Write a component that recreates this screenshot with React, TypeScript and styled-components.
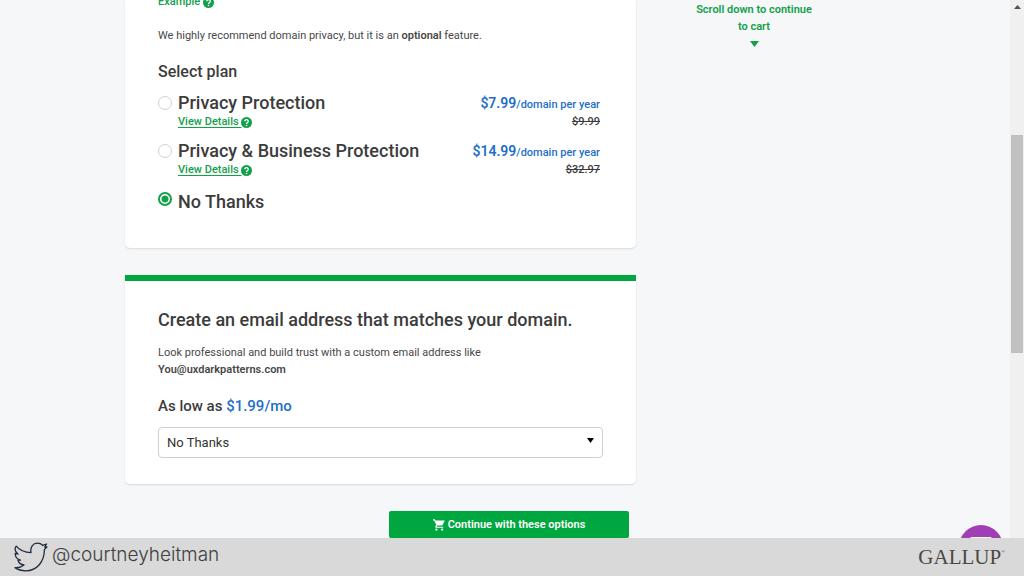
import React, { useState } from "react";
import styled, { createGlobalStyle } from "styled-components";

const GlobalStyle = createGlobalStyle`
  *, *::before, *::after { box-sizing: border-box; }
  body {
    margin: 0;
    background: #f5f7f9;
    color: #3c3c3c;
    font-family: Roboto, "Liberation Sans", sans-serif;
    font-size: 11px;
    line-height: 17px;
  }
  h2, h3, p { margin: 0; }
`;

const Frame = styled.div`
  display: grid;
  grid-template-rows: minmax(0, 1fr) auto;
  height: 100vh;
  overflow: hidden;
`;

const Viewport = styled.div`
  position: relative;
  display: flex;
  min-height: 0;
  overflow: hidden;
`;

const Page = styled.div`
  flex: 1;
  min-width: 0;
`;

const Columns = styled.div`
  display: grid;
  grid-template-columns: minmax(0, 1fr) 236px;
  max-width: 760px;
  margin: 0 auto;
  padding-right: 13px;
`;

const Main = styled.main`
  display: flex;
  flex-direction: column;
`;

const Card = styled.section<{ $accent?: boolean }>`
  padding: ${(p) => (p.$accent ? "27px 33px 26px" : "0 36px 36px 33px")};
  margin-bottom: 27px;
  background: #fff;
  border-top: ${(p) => (p.$accent ? "6px solid #00a63f" : "0")};
  border-radius: 0 0 5px 5px;
  box-shadow: 0 1px 2px rgba(0, 0, 0, 0.12);
`;

const GreenLink = styled.a<{ $plain?: boolean }>`
  color: #12a04a;
  font-weight: 500;
  text-decoration: ${(p) => (p.$plain ? "none" : "underline")};
  text-underline-offset: 2px;
  svg { vertical-align: -3px; }
`;

const Example = styled.div`
  margin-top: -7px;
`;

const Paragraph = styled.p`
  color: #484848;
  strong { font-weight: 600; }
`;

const Intro = styled(Paragraph)`
  margin-top: 17px;
`;

const Subheading = styled.h3`
  font-size: 15px;
  line-height: 22px;
  font-weight: 500;
`;

const PlanTitle = styled(Subheading)`
  margin-top: 17px;
  font-size: 16px;
`;

const Heading = styled.h2`
  font-size: 18px;
  line-height: 24px;
  font-weight: 500;
  margin-bottom: 12px;
`;

const Plans = styled.div`
  display: flex;
  flex-direction: column;
  gap: 11px;
  margin-top: 10px;
`;

const Plan = styled.div`
  display: grid;
  grid-template-columns: 14px minmax(0, 1fr) auto;
  column-gap: 6px;
`;

const Radio = styled.input`
  appearance: none;
  width: 14px;
  height: 14px;
  margin: 3px 0 0;
  border: 1px solid #cfd2d6;
  border-radius: 50%;
  background: #fff;
  &:checked {
    border: 2px solid #12a04a;
    background: radial-gradient(circle, #12a04a 3px, #fff 4px);
  }
`;

const PlanInfo = styled.div`
  display: flex;
  flex-direction: column;
  align-items: flex-start;
`;

const PlanName = styled.label<{ $low?: boolean }>`
  padding-top: ${(p) => (p.$low ? "3px" : "0")};
  font-size: 18px;
  line-height: 20px;
  font-weight: 500;
`;

const Pricing = styled.div`
  text-align: right;
  font-weight: 500;
`;

const Price = styled.div`
  height: 20px;
  color: #1f6fc9;
  line-height: 20px;
  b { font-size: 14px; font-weight: 600; }
`;

const OldPrice = styled.s`
  display: block;
`;

const EmailPrice = styled(Subheading)`
  margin: 17px 0 10px;
  span { color: #1f6fc9; }
`;

const SelectBox = styled.div`
  position: relative;
  svg {
    position: absolute;
    right: 9px;
    top: 11px;
    pointer-events: none;
  }
`;

const Select = styled.select`
  appearance: none;
  display: block;
  width: 100%;
  height: 31px;
  padding: 0 8px;
  border: 1px solid #cfcfcf;
  border-radius: 4px;
  background: #fff;
  color: #333;
  font: 400 13px Roboto, "Liberation Sans", sans-serif;
`;

const ContinueButton = styled.button`
  display: flex;
  align-items: center;
  justify-content: center;
  gap: 3px;
  align-self: flex-end;
  width: 240px;
  height: 27px;
  margin-right: 7px;
  padding: 0;
  border: 0;
  border-radius: 2px;
  background: #00a63f;
  color: #fff;
  font: 600 11px Roboto, "Liberation Sans", sans-serif;
`;

const Aside = styled.aside`
  display: flex;
  flex-direction: column;
  align-items: center;
  gap: 6px;
  padding-top: 1px;
  color: #12a04a;
  font-weight: 600;
  text-align: center;
  p { max-width: 124px; }
`;

const ChatBubble = styled.button`
  position: absolute;
  right: 21px;
  bottom: -31px;
  display: flex;
  justify-content: center;
  align-items: flex-start;
  width: 44px;
  height: 44px;
  padding: 12px 0 0;
  border: 0;
  border-radius: 50%;
  background: #a13db5;
`;

const ScrollTrack = styled.div`
  display: flex;
  flex-direction: column;
  align-items: center;
  width: 14px;
  padding-top: 5px;
  background: #f0f0f0;
`;

const ScrollThumb = styled.div`
  width: 12px;
  height: 218px;
  margin-top: 126px;
  background: #c1c1c1;
`;

const Footer = styled.footer`
  display: flex;
  align-items: center;
  justify-content: space-between;
  height: 38px;
  padding: 0 19px 0 14px;
  background: #d9d9d9;
`;

const Handle = styled.div`
  display: flex;
  align-items: flex-start;
  gap: 4px;
  color: #404040;
  font-family: Inter, "Liberation Sans", sans-serif;
  font-size: 19px;
  font-weight: 300;
  line-height: 26px;
`;

const Brand = styled.div`
  display: flex;
  color: #4a4844;
  font-family: "Liberation Serif", serif;
  font-size: 21px;
  line-height: 36px;
  sup { font-size: 5px; line-height: 26px; }
`;

const HelpIcon = () => (
  <svg width="11" height="11" viewBox="0 0 22 22" aria-hidden="true">
    <circle cx="11" cy="11" r="11" fill="#12a04a" />
    <path d="M7.500 8.600a3.500 3.300 0 1 1 5.400 2.600c-1.200.8-1.900 1.300-1.900 2.600" fill="none" stroke="#fff" strokeWidth="2.600" />
    <circle cx="11" cy="17" r="1.600" fill="#fff" />
  </svg>
);

const CartIcon = () => (
  <svg width="12" height="12" viewBox="1 2 21 20" fill="#fff" aria-hidden="true">
    <path d="M7 18c-1.100 0-2 .9-2 2s.9 2 2 2 2-.9 2-2-.9-2-2-2zM1 2v2h2l3.600 7.590-1.350 2.450C4.520 15.370 5.480 17 7 17h12v-2H7.420l1.130-2h7.450c.75 0 1.410-.41 1.750-1.030L21.700 4H5.210L4.270 2H1zm16 16c-1.100 0-2 .9-2 2s.9 2 2 2 2-.9 2-2-.9-2-2-2z" />
  </svg>
);

const BirdIcon = () => (
  <svg width="34" height="30" viewBox="0 0 34 30" fill="none" stroke="#1f2d3d" strokeWidth="1.300" strokeLinejoin="round" aria-hidden="true">
    <path d="M2.200 4.200C5.500 8.200 10.500 10.500 17 10.700C16 5 19 1.200 23.400 1.200C25.500 1.200 27.400 2 28.600 3.300L32.500 2L30.700 5L33 4.800L30.400 7.600C30.500 19 23.500 28.800 11.500 28.800C7.500 28.800 3.800 27.600 1 25.700C4.500 26 7.500 25 10 23C6.800 22.700 4.800 20.900 4 18.300L6.500 18.200C3.200 17.200 1.200 14.700 1.200 11.400L4 12.200C.8 9.600.4 6.700 2.200 4.200Z" />
  </svg>
);

const Triangle = ({ color, width, height, up }: { color: string; width: number; height: number; up?: boolean }) => (
  <svg width={width} height={height} viewBox="0 0 10 6" preserveAspectRatio="none" fill={color} aria-hidden="true">
    <path d={up ? "M0 6h10L5 0z" : "M0 0h10L5 6z"} />
  </svg>
);

const plans = [
  { id: "privacy", name: "Privacy Protection", price: "$7.99", old: "$9.99" },
  { id: "business", name: "Privacy & Business Protection", price: "$14.99", old: "$32.97" },
  { id: "none", name: "No Thanks" },
];

export default function App() {
  const [plan, setPlan] = useState("none");
  return (
    <>
      <GlobalStyle />
      <Frame>
        <Viewport>
          <Page>
            <Columns>
              <Main>
                <Card>
                  <Example>
                    <GreenLink href="#example" $plain>Example <HelpIcon /></GreenLink>
                  </Example>
                  <Intro>
                    We highly recommend domain privacy, but it is an <strong>optional</strong> feature.
                  </Intro>
                  <PlanTitle>Select plan</PlanTitle>
                  <Plans>
                    {plans.map((p) => (
                      <Plan key={p.id}>
                        <Radio type="radio" name="plan" id={p.id} checked={plan === p.id} onChange={() => setPlan(p.id)} />
                        <PlanInfo>
                          <PlanName htmlFor={p.id} $low={!p.price}>{p.name}</PlanName>
                          {p.price && <GreenLink href={`#${p.id}-details`}>View Details <HelpIcon /></GreenLink>}
                        </PlanInfo>
                        {p.price && (
                          <Pricing>
                            <Price><b>{p.price}</b>/domain per year</Price>
                            <OldPrice>{p.old}</OldPrice>
                          </Pricing>
                        )}
                      </Plan>
                    ))}
                  </Plans>
                </Card>
                <Card $accent>
                  <Heading>Create an email address that matches your domain.</Heading>
                  <Paragraph>
                    Look professional and build trust with a custom email address like<br />
                    <strong>You@uxdarkpatterns.com</strong>
                  </Paragraph>
                  <EmailPrice>As low as <span>$1.99/mo</span></EmailPrice>
                  <SelectBox>
                    <Select aria-label="Email plan" defaultValue="none">
                      <option value="none">No Thanks</option>
                    </Select>
                    <Triangle color="#000" width={7} height={5} />
                  </SelectBox>
                </Card>
                <ContinueButton type="button"><CartIcon />Continue with these options</ContinueButton>
              </Main>
              <Aside>
                <p>Scroll down to continue to cart</p>
                <Triangle color="#12a04a" width={9} height={6} />
              </Aside>
            </Columns>
          </Page>
          <ChatBubble type="button" aria-label="Chat">
            <svg width="22" height="16" viewBox="0 0 22 16" aria-hidden="true"><rect width="22" height="16" rx="2" fill="#fff" /></svg>
          </ChatBubble>
          <ScrollTrack>
            <Triangle color="#505050" width={7} height={4} up />
            <ScrollThumb />
          </ScrollTrack>
        </Viewport>
        <Footer>
          <Handle><BirdIcon />@courtneyheitman</Handle>
          <Brand>GALLUP<sup>®</sup></Brand>
        </Footer>
      </Frame>
    </>
  );
}
